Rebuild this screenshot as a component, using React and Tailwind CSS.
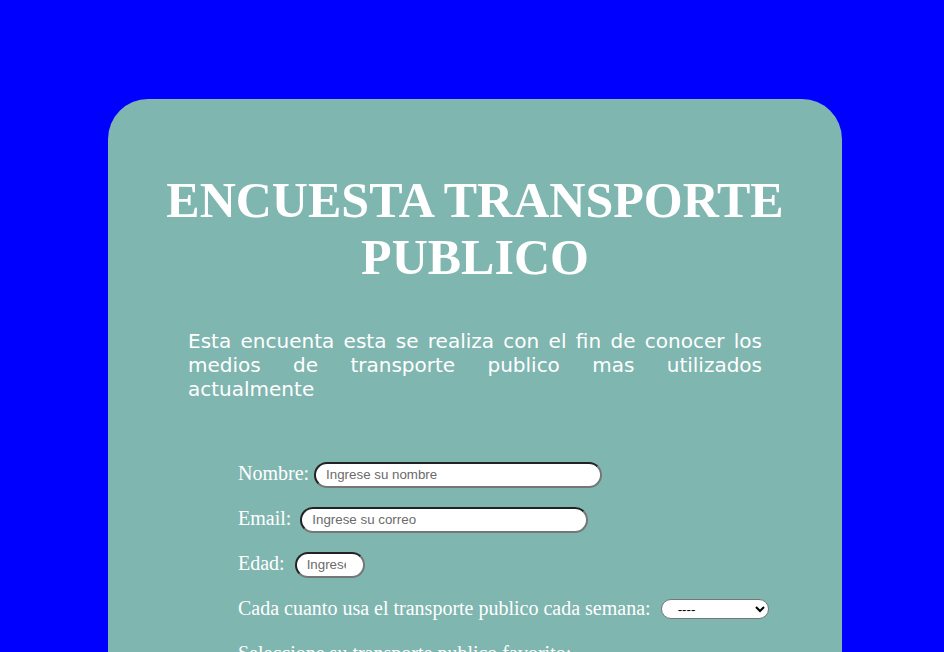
export default function App() {
  const inputCls =
    "h-[26px] mt-[4px] rounded-full bg-white pl-[10px] text-[13.33px] text-black placeholder:text-[#6b6b6b] border-2 border-t-[#222222] border-l-[#222222] border-b-[#767676] border-r-[#767676] outline-none [font-family:Arial,'Liberation_Sans',sans-serif]";

  return (
    <div className="min-h-[652px] bg-[#0000ff] pt-[99px] overflow-hidden">
      <div className="ml-[108px] w-[734px] rounded-t-[40px] bg-[#7fb6b0] pb-10 text-white">
        <h1 className="pt-[73px] text-center text-[50px] font-bold leading-[57px] [font-family:'Liberation_Serif','Times_New_Roman',serif]">
          ENCUESTA TRANSPORTE PUBLICO
        </h1>

        <p className="mx-20 mt-[43px] text-justify text-[20px] leading-[24px] [font-family:'DejaVu_Sans',Verdana,sans-serif]">
          Esta encuenta esta se realiza con el fin de conocer los medios de transporte publico mas utilizados actualmente
        </p>

        <form className="ml-[130px] mt-[59px] flex flex-col gap-[19px] text-[20px] leading-[26px] [font-family:'Liberation_Serif','Times_New_Roman',serif]">
          <div className="flex h-[26px] items-center">
            <label>Nombre:</label>
            <input className={`${inputCls} ml-[5px] w-[288px] pr-[10px]`} placeholder="Ingrese su nombre" />
          </div>
          <div className="flex h-[26px] items-center">
            <label>Email:</label>
            <input className={`${inputCls} ml-[9px] w-[288px] pr-[10px]`} placeholder="Ingrese su correo" />
          </div>
          <div className="flex h-[26px] items-center">
            <label>Edad:</label>
            <input className={`${inputCls} ml-[10px] w-[70px] pr-[17px]`} placeholder="Ingrese su edad" />
          </div>
          <div className="flex h-[26px] items-center">
            <label>Cada cuanto usa el transporte publico cada semana:</label>
            <select className="ml-[10px] mt-[2px] h-[20px] w-[108px] rounded-full border border-[#767676] bg-white pl-[12px] text-[13.33px] text-black [font-family:Arial,'Liberation_Sans',sans-serif]">
              <option>----</option>
              <option>1 vez</option>
              <option>2 a 3 veces</option>
              <option>Todos los dias</option>
            </select>
          </div>
          <div className="flex h-[26px] items-center">
            <label>Seleccione su transporte publico favorito:</label>
          </div>
        </form>
      </div>
    </div>
  );
}
